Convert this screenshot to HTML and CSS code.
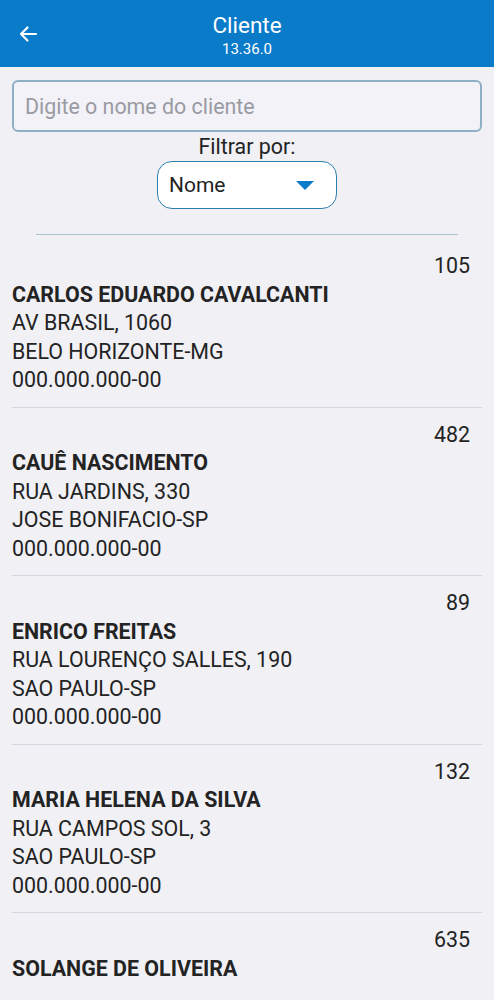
FILE: index.html
```html
<!DOCTYPE html>
<html lang="pt-BR">
<head>
  <meta charset="UTF-8" />
  <meta name="viewport" content="width=device-width, initial-scale=1.0"/>
  <title>Cliente</title>
  <link rel="stylesheet" href="styles.css">
</head>
<body>
  <header class="topbar">
    <button class="back" aria-label="Voltar">
      <svg width="24" height="24" viewBox="0 0 24 24"><path d="M20 12H5M11.5 5.5 5 12l6.5 6.5" fill="none" stroke="#fff" stroke-width="2.2" stroke-linecap="round" stroke-linejoin="round"/></svg>
    </button>
    <div class="title">
      <div class="name">Cliente</div>
      <div class="version">13.36.0</div>
    </div>
  </header>

  <main class="content">
    <input class="search" type="text" placeholder="Digite o nome do cliente"/>
    <div class="filter">
      <label>Filtrar por:</label>
      <div class="select">
        <span>Nome</span>
        <span class="caret"></span>
      </div>
    </div>
    <hr class="sep"/>

    <ul class="list">
      <li class="item">
        <div class="code">105</div>
        <div class="client">CARLOS EDUARDO CAVALCANTI</div>
        <div>AV BRASIL, 1060</div>
        <div>BELO HORIZONTE-MG</div>
        <div>000.000.000-00</div>
      </li>
      <li class="item">
        <div class="code">482</div>
        <div class="client">CAUÊ NASCIMENTO</div>
        <div>RUA JARDINS, 330</div>
        <div>JOSE BONIFACIO-SP</div>
        <div>000.000.000-00</div>
      </li>
      <li class="item">
        <div class="code">89</div>
        <div class="client">ENRICO FREITAS</div>
        <div>RUA LOURENÇO SALLES, 190</div>
        <div>SAO PAULO-SP</div>
        <div>000.000.000-00</div>
      </li>
      <li class="item">
        <div class="code">132</div>
        <div class="client">MARIA HELENA DA SILVA</div>
        <div>RUA CAMPOS SOL, 3</div>
        <div>SAO PAULO-SP</div>
        <div>000.000.000-00</div>
      </li>
      <li class="item">
        <div class="code">635</div>
        <div class="client">SOLANGE DE OLIVEIRA</div>
      </li>
    </ul>
  </main>
</body>
</html>
```

FILE: styles.css
```css
body { margin: 0; font-family: Roboto, "Noto Sans", sans-serif; background: #f0f0f5; color: #232323; overflow: hidden; }

.topbar { height: 67px; background: #0a7bc9; color: #fff; display: flex; align-items: center; position: relative; }
.back { position: absolute; left: 16px; top: 22px; background: none; border: 0; padding: 0; width: 24px; height: 24px; }
.title { flex: 1; text-align: center; margin-top: 3px; }
.title .name { font-size: 22.5px; line-height: 26px; }
.title .version { font-size: 15px; line-height: 20px; margin-top: 1px; }

.content { padding: 13px 12px 0; }
.search { box-sizing: border-box; width: 100%; height: 52px; margin: 0; padding: 0 11px; font: 21.4px Roboto, sans-serif; background: #f2f2f8; border: 2px solid #8fb0c4; border-radius: 6px; outline: none; }
.search::placeholder { color: #9a9aa2; }

.filter { display: flex; flex-direction: column; align-items: center; margin-top: 1px; }
.filter label { font-size: 21.4px; line-height: 28px; }
.select { box-sizing: border-box; width: 180px; height: 48px; margin-top: 0; background: #fff; border: 1.5px solid #2c7fab; border-radius: 15px; display: flex; align-items: center; justify-content: space-between; padding: 0 22px 0 11px; font-size: 21px; }
.caret { width: 0; height: 0; border-left: 9px solid transparent; border-right: 9px solid transparent; border-top: 9px solid #0a7bc9; }

.sep { margin: 25px 24px 0; border: 0; border-top: 1.5px solid #a9c3d3; }

.list { list-style: none; margin: 0; padding: 0; }
.item { padding: 17px 12px 12px 0; border-bottom: 1px solid #d6d6de; font-size: 21.4px; line-height: 28.5px; }
.item + .item { padding-top: 13px; }
.item:last-child { border-bottom: 0; }
.code { text-align: right; }
.client { font-weight: bold; }
```
